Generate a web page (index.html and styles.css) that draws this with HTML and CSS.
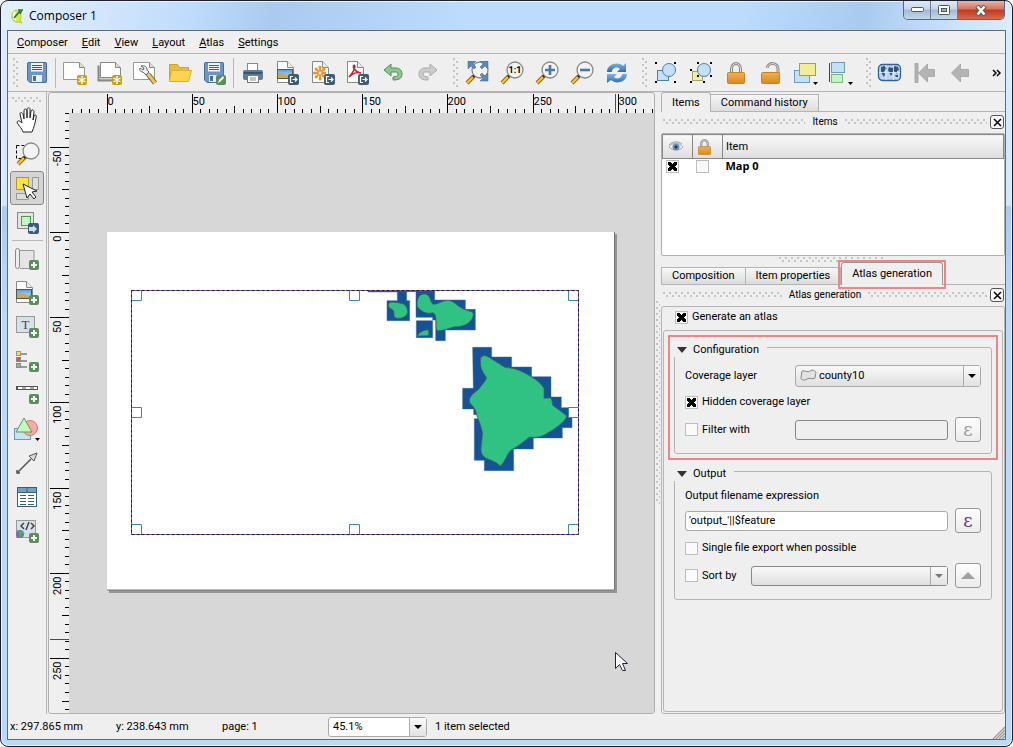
FILE: index.html
```html
<!DOCTYPE html>
<html lang="en">

<head>
    <meta charset="UTF-8">
    <meta name="viewport" content="width=device-width, initial-scale=1.0">
    <title>Composer 1</title>
    <link rel="stylesheet" href="styles.css">
</head>

<body>
<svg class="defs" width="0" height="0" aria-hidden="true">
    <defs>
        <linearGradient id="lockGold" x1="0" x2="0" y1="0" y2="1">
            <stop offset="0" stop-color="#eeb055"/><stop offset="1" stop-color="#d98a1c"/>
        </linearGradient>
        <linearGradient id="refreshBlue" x1="0" x2="0" y1="0" y2="1">
            <stop offset="0" stop-color="#7fb2e6"/><stop offset="1" stop-color="#2f6cb4"/>
        </linearGradient>
        <linearGradient id="sky" x1="0" x2="0" y1="0" y2="1">
            <stop offset="0" stop-color="#4f9fe0"/><stop offset="1" stop-color="#d3ecfb"/>
        </linearGradient>
        <symbol id="plus" viewBox="0 0 10 10">
            <rect width="10" height="10" rx="2" fill="#5a8f5a"/>
            <path d="M5 2v6M2 5h6" stroke="#fff" stroke-width="2"/>
        </symbol>
        <symbol id="star" viewBox="0 0 10 10">
            <rect width="10" height="10" rx="2" fill="#c8a010"/>
            <path d="M5 1v8M1.5 3l7 4M1.5 7l7-4" stroke="#fff" stroke-width="1.4"/>
        </symbol>
        <symbol id="export" viewBox="0 0 11 11">
            <rect width="11" height="11" rx="2" fill="#3f5c76"/>
            <path d="M5 2.5H2.5v6H5M4.5 5.5h4M7 3.5l2 2-2 2" fill="none" stroke="#fff" stroke-width="1.2"/>
        </symbol>
        <symbol id="floppy" viewBox="0 0 20 21">
            <path d="M1 .5h18l.5.5v19l-.5.5H3L.5 18V1z" fill="#6b95c6" stroke="#4a6f9c"/>
            <rect x="4" y="1" width="12" height="8.500" fill="#f4f4f4"/>
            <path d="M5 3.500h10M5 5.500h10M5 7.500h10" stroke="#555"/>
            <rect x="5" y="13" width="10" height="7" fill="#eee"/>
            <rect x="6" y="14" width="3" height="5" fill="#496d99"/>
        </symbol>
        <symbol id="sheet" viewBox="0 0 17 22">
            <path d="M.5.500h10l6 6v15H.5z" fill="#fff" stroke="#888"/>
            <path d="M10.500.500v6h6" fill="#eee" stroke="#888"/>
        </symbol>
        <symbol id="lens" viewBox="0 0 24 24">
            <path d="M2 22l7-7" stroke="#8a5a10" stroke-width="4"/>
            <path d="M2 22l7-7" stroke="#f7c531" stroke-width="2.400"/>
            <path d="M8 16l3-3" stroke="#222" stroke-width="2.500"/>
            <circle cx="15" cy="9" r="8" fill="#f3f3f3" stroke="#888" stroke-width="1.300"/>
        </symbol>
        <symbol id="lock" viewBox="0 0 18 22">
            <path d="M4.500 11V7a4.500 5.500 0 0 1 9 0v4" fill="none" stroke="#888" stroke-width="3"/>
            <path d="M4.500 11V7a4.500 5.500 0 0 1 9 0v4" fill="none" stroke="#ddd"/>
            <rect x=".5" y="10.500" width="17" height="11" rx="1" fill="url(#lockGold)" stroke="#c98220"/>
        </symbol>
    </defs>
</svg>

<div class="window">
    <header class="titlebar">
        <svg class="logo" width="14" height="16" viewBox="0 0 14 16">
            <path d="M6 2C2 3 1 7 2 10s4 5 7 4l3 1-2-3c2-3 1-8-4-10z" fill="#d8e84a" stroke="#b7c93a"/>
            <path d="M5 4c-2 2-2 6 1 8" fill="none" stroke="#fff" stroke-width="2"/>
            <path d="M4 10l6-7M8 2h4l-2 4" fill="none" stroke="#207a2a" stroke-width="1.600"/>
        </svg>
        <h1>Composer 1</h1>
        <div class="win-buttons">
            <button aria-label="Minimize"><svg width="13" height="6"><rect x=".5" y=".5" width="12" height="4" rx="1" fill="#fff" stroke="#555"/></svg></button>
            <button aria-label="Maximize"><svg width="12" height="10"><rect x=".5" y=".5" width="11" height="9" rx="1" fill="#fff" stroke="#555"/><rect x="3.500" y="3.500" width="5" height="3" fill="#9bb5d0" stroke="#555"/></svg></button>
            <button class="close" aria-label="Close"><svg width="12" height="11" viewBox="0 0 12 11"><path d="M2 1l8 9M10 1l-8 9" stroke="#555" stroke-width="4.500"/><path d="M2.500 1.500l7 8M9.500 1.500l-7 8" stroke="#fff" stroke-width="2.600"/></svg></button>
        </div>
    </header>

    <div class="client">
        <nav class="menubar">
            <a href="#"><u>C</u>omposer</a>
            <a href="#"><u>E</u>dit</a>
            <a href="#"><u>V</u>iew</a>
            <a href="#"><u>L</u>ayout</a>
            <a href="#"><u>A</u>tlas</a>
            <a href="#"><u>S</u>ettings</a>
        </nav>

        <div class="toolbar">
            <span class="grip first"></span>
            <button aria-label="Save project"><svg width="24" height="24"><use href="#floppy" x="2" y="1" width="20" height="21"/></svg></button>
            <span class="sep"></span>
            <button aria-label="New composer"><svg width="26" height="24">
                <path d="M1.500 1.500h16l5 5v12h-21z" fill="#fff" stroke="#999"/><path d="M17.500 1.500v5h5" fill="#ddd" stroke="#888"/>
                <use href="#star" x="15" y="14" width="10" height="10"/></svg></button>
            <button aria-label="Duplicate composer"><svg width="26" height="24">
                <path d="M1.500 4.500v15h20" fill="#ccc" stroke="#888" stroke-width="2"/>
                <path d="M3.500 1.500h15l5 5v10h-20z" fill="#fff" stroke="#888"/><path d="M18.500 1.500v5h5" fill="#ddd" stroke="#888"/>
                <use href="#star" x="15" y="14" width="10" height="10"/></svg></button>
            <button aria-label="Composer manager"><svg width="26" height="24">
                <path d="M1.500 1.500h16l5 5v12h-21z" fill="#fff" stroke="#999"/><path d="M17.500 1.500v5h5" fill="#ddd" stroke="#888"/>
                <path d="M9 5c4-1 6 1 6 4l2 2-3 3-3-3c-3 0-4-2-3-4l3 2 1-2z" fill="#eee" stroke="#666"/>
                <path d="M16 13l7 9" stroke="#7d6330" stroke-width="5"/><path d="M16 13l7 9" stroke="#e8c866" stroke-width="3"/></svg></button>
            <button aria-label="Add from template"><svg width="24" height="24">
                <path d="M1.500 19.500v-16h8l2 3h9v3" fill="#e8bc3c" stroke="#d0a22c"/>
                <path d="M1.500 20.500l2-11h20l-3 11z" fill="#fbd54f" stroke="#dcae38"/></svg></button>
            <button aria-label="Save as template"><svg width="24" height="24"><use href="#floppy" x="1" y="1" width="20" height="21"/>
                <rect x="13" y="14" width="10" height="10" rx="2" fill="#5a8f5a"/><path d="M15 22l1-3 4-4 1 2-4 4z" fill="#fff"/></svg></button>
            <span class="sep"></span>
            <button aria-label="Print"><svg width="24" height="24">
                <rect x="6.500" y="2.500" width="10" height="8" fill="#fff" stroke="#888"/>
                <rect x="2" y="9" width="20" height="10" rx="2" fill="#5b7d99"/><path d="M3 12h18" stroke="#38546d" stroke-width="2"/>
                <rect x="6.500" y="14.500" width="11" height="7" fill="#fff" stroke="#777"/><path d="M9 17h6M9 19h6" stroke="#888"/></svg></button>
            <button aria-label="Export as image"><svg width="24" height="24"><use href="#sheet" x="1" y="0" width="17" height="22"/>
                <rect x="1.500" y="8.500" width="15" height="9" fill="url(#sky)" stroke="#555"/><path d="M2 12c4-1 8 2 14 3v2H2z" fill="#c9a85a"/>
                <use href="#export" x="12" y="13" width="11" height="11"/></svg></button>
            <button aria-label="Export as SVG"><svg width="24" height="24"><use href="#sheet" x="1" y="0" width="17" height="22"/>
                <path d="M9 6v12M3 12h12M5 8l8 8M13 8l-8 8" stroke="#f09020" stroke-width="1.800"/>
                <g fill="#f09020"><circle cx="9" cy="6" r="1.500"/><circle cx="9" cy="18" r="1.500"/><circle cx="3.500" cy="12" r="1.500"/><circle cx="5" cy="8" r="1.500"/><circle cx="13" cy="8" r="1.500"/><circle cx="5" cy="16" r="1.500"/></g><circle cx="9" cy="12" r="1.500" fill="#fff"/>
                <use href="#export" x="13" y="13" width="11" height="11"/></svg></button>
            <button aria-label="Export as PDF"><svg width="24" height="24"><use href="#sheet" x="1" y="0" width="17" height="22"/>
                <path d="M8 4c2 1 0 7-5 12M8 4c-2 2 2 8 7 8-3-1-8 0-12 4" fill="none" stroke="#c8242a" stroke-width="1.600"/>
                <use href="#export" x="12" y="13" width="11" height="11"/></svg></button>
            <button aria-label="Undo"><svg width="24" height="24"><path d="M3 9l7-6v4h5c4 0 6 3 6 6 0 5-4 6-9 6v-3c3 0 5-1 5-3s-1-2-3-2h-4v4z" fill="#8fc793" stroke="#4e9157"/></svg></button>
            <button aria-label="Redo"><svg width="24" height="24"><path d="M21 9l-7-6v4H9c-4 0-6 3-6 6 0 5 4 6 9 6v-3c-3 0-5-1-5-3s1-2 3-2h4v4z" fill="#ccc" stroke="#aaa"/></svg></button>
            <span class="grip"></span>
            <button aria-label="Zoom full"><svg width="24" height="24"><use href="#lens" width="24" height="24"/>
                <path d="M3 0h8L8 3l3 3-2 2-3-3-3 3zM23 0v8l-3-3-3 3-2-2 3-3-3-3zM23 20h-8l3-3-3-3 2-2 3 3 3-3z" fill="#5c87ba" stroke="#3f6697" stroke-width=".5"/></svg></button>
            <button aria-label="Zoom to 100%"><svg width="24" height="24"><use href="#lens" width="24" height="24"/><text class="lens-text" x="15" y="12">1:1</text></svg></button>
            <button aria-label="Zoom in"><svg width="24" height="24"><use href="#lens" width="24" height="24"/><path d="M15 4v10M10 9h10" stroke="#4677b0" stroke-width="2.600"/></svg></button>
            <button aria-label="Zoom out"><svg width="24" height="24"><use href="#lens" width="24" height="24"/><path d="M10 9h10" stroke="#4677b0" stroke-width="2.600"/></svg></button>
            <button aria-label="Refresh"><svg width="24" height="24">
                <path d="M2 11c0-8 11-11 16-6l3-3v9h-9l3-3c-3-3-8-1-8 3z" fill="url(#refreshBlue)"/>
                <path d="M22 13c0 8-11 11-16 6l-4 3v-9h10l-3 3c3 3 8 1 8-3z" fill="url(#refreshBlue)"/></svg></button>
            <span class="grip"></span>
            <button aria-label="Group items"><svg width="24" height="24">
                <path d="M1 1h2v2H1zM20 1h2v2h-2zM1 20h2v2H1zM20 20h2v2h-2z"/>
                <rect x="3.500" y="9.500" width="11" height="10" fill="#c3e0f7" stroke="#4f7ea5"/><circle cx="15" cy="9" r="6.500" fill="#c3e0f7" stroke="#4f7ea5"/></svg></button>
            <button aria-label="Ungroup items"><svg width="24" height="24">
                <rect x="3.500" y="10.500" width="10" height="9" fill="#f0eda0" stroke="#a5a26a"/><circle cx="15" cy="9" r="6.500" fill="#c3e0f7" stroke="#4f7ea5"/>
                <path d="M1 8h2v2H1zM8 1h2v2H8zM21 1h2v2h-2zM21 14h2v2h-2zM1 20h2v2H1zM14 20h2v2h-2zM8 14h2v2H8z"/></svg></button>
            <button aria-label="Lock items"><svg width="24" height="24"><use href="#lock" x="3" y="1" width="18" height="22"/></svg></button>
            <button aria-label="Unlock items"><svg width="24" height="24">
                <path d="M8 7c1-6 11-6 11 1v4" fill="none" stroke="#888" stroke-width="3"/><path d="M8 7c1-6 11-6 11 1v4" fill="none" stroke="#ddd"/>
                <rect x="2.500" y="11.500" width="18" height="11" rx="1" fill="url(#lockGold)" stroke="#c98220"/></svg></button>
            <button aria-label="Raise items"><svg width="26" height="24"><rect x="1.500" y="9.500" width="15" height="12" fill="#c3e0f7" stroke="#6d9abf"/>
                <rect x="6.500" y="2.500" width="16" height="12" fill="#f2ee98" stroke="#a09d60"/><path d="M20 21h5l-2.500 3z"/></svg></button>
            <button aria-label="Align items"><svg width="26" height="24"><path d="M1.500 2v19" stroke="#444"/><rect x="3.500" y="1.500" width="13" height="10" fill="#c3e0f7" stroke="#6d9abf"/>
                <rect x="3.500" y="13.500" width="11" height="8" fill="#c5f3c5" stroke="#7fb57f"/><path d="M20 21h5l-2.500 3z"/></svg></button>
            <span class="grip"></span>
            <button aria-label="Preview atlas"><svg width="26" height="24"><rect x="1.500" y="3.500" width="22" height="16" rx="4" fill="#bcd3ee" stroke="#34608f" stroke-width="1.300"/>
                <path d="M4 6l3-1 2 1 1 2-2 1-1 2 1 2-1 3-2-3-1-3zM12 6l3 1 3-2 3 1 1 3-2 1v3l-2-2-2-1-1 3-1 2-2-4-1-2zM18 14h3v2h-2z" fill="#2f5480"/><path d="M2 11.500h21M9 4v15M16.500 4v15" stroke="#e5effa" stroke-width=".8"/></svg></button>
            <button aria-label="First feature"><svg width="24" height="24"><path d="M2 2.500h3v19H2zM5.500 12l9-9v5.500h7v7h-7V21z" fill="#b4b4b4" stroke="#999" stroke-width=".7"/></svg></button>
            <button aria-label="Previous feature"><svg width="24" height="24"><path d="M3.500 12l9-9v5.500h8v7h-8V21z" fill="#b4b4b4" stroke="#999" stroke-width=".7"/></svg></button>
            <button class="more" aria-label="More"><svg width="9" height="8"><path d="M1 1l3 3-3 3M5 1l3 3-3 3" fill="none" stroke="#000" stroke-width="1.500"/></svg></button>
        </div>

        <main class="workspace">
            <aside class="toolbox">
                <span class="grip"></span>
                <button aria-label="Pan"><svg width="24" height="26" viewBox="0 0 24 26"><path d="M8 25c-1-4-6-8-6-10 1-2 3-1 5 1L5 7c0-2 2-2 3 0l1 5V4c0-3 3-2 3 0v7-9c1-2 3-1 3 0v9l1-7c1-2 3-1 3 1l-1 8 1-4c1-2 3-1 2 2-1 6-2 9-4 14z" fill="#fff" stroke="#222"/></svg></button>
                <button aria-label="Zoom"><svg width="26" height="24"><path d="M2.500 3.500h11M2.500 3.500v13h11" fill="none" stroke="#000" stroke-dasharray="3 2"/><use href="#lens" x="2" width="24" height="24"/></svg></button>
                <button class="active" aria-label="Select item"><svg width="26" height="26"><rect x="2.500" y="2.500" width="12" height="12" fill="#fbe346" stroke="#b59a25"/>
                    <path d="M18.500 2.500h6v12h-6zM2.500 18.500h12v6h-12z" fill="#ddd" stroke="#999"/><path d="M9 9l14 7-5 1 4 5-2 2-4-5-3 4z" fill="#fff" stroke="#222"/></svg></button>
                <button aria-label="Move item content"><svg width="26" height="24"><rect x="3.500" y="2.500" width="16" height="16" fill="#e4e4e4" stroke="#888"/><rect x="7.500" y="6.500" width="9" height="9" fill="#c5f7c5" stroke="#4d9a55"/>
                    <rect x="14" y="13" width="11" height="11" rx="2" fill="#3f5c76"/><path d="M15 17h4v-2l4 4-4 4v-2h-4z" fill="#cfe0ee"/></svg></button>
                <span class="sep"></span>
                <button aria-label="Add map"><svg width="26" height="26"><path d="M6 4.500h14v18H6" fill="#e4e4e4" stroke="#999"/><rect x="1.500" y="2.500" width="4" height="20" rx="2" fill="#eee" stroke="#888"/><use href="#plus" x="15" y="14" width="10" height="10"/></svg></button>
                <button aria-label="Add image"><svg width="26" height="26"><use href="#sheet" x="2" y="1" width="17" height="22"/>
                    <rect x="2.500" y="9.500" width="15" height="9" fill="url(#sky)" stroke="#555"/><path d="M3 13c4-1 8 2 14 3v2H3z" fill="#c9a85a"/><use href="#plus" x="15" y="15" width="10" height="10"/></svg></button>
                <button aria-label="Add label"><svg width="26" height="24"><rect x="2.500" y="1.500" width="18" height="16" fill="#d6e2ea" stroke="#999"/><text class="tool-t" x="11.500" y="14">T</text><use href="#plus" x="15" y="13" width="10" height="10"/></svg></button>
                <button aria-label="Add legend"><svg width="26" height="22"><path d="M7 4h6M7 11h6M7 17h6" stroke="#999" stroke-width="2"/><rect x="2.500" y="1.500" width="4" height="4" fill="#f3e33a" stroke="#998"/><rect x="2.500" y="7.500" width="4" height="4" fill="#dc5555" stroke="#888"/><rect x="2.500" y="13.500" width="4" height="4" fill="#81bd7c" stroke="#888"/><use href="#plus" x="15" y="12" width="10" height="10"/></svg></button>
                <button aria-label="Add scalebar"><svg width="26" height="18"><rect x="2" y="0" width="22" height="4" fill="#555"/><path d="M4 2h4M12 2h4M20 2h3" stroke="#fff" stroke-width="2"/><path d="M8 2h4M16 2h4" stroke="#aaa" stroke-width="2"/><use href="#plus" x="15" y="8" width="10" height="10"/></svg></button>
                <button aria-label="Add shape"><svg width="28" height="26"><rect x="1.500" y="12.500" width="16" height="11" fill="#c8e2f5" stroke="#6d9abf"/><circle cx="17" cy="12" r="7.500" fill="#f8aaaa" stroke="#d87575"/><path d="M3 16L11 2l8 14z" fill="#c5f7c0" stroke="#5a9a55"/><path d="M22 22h5l-2.500 3z"/></svg></button>
                <button aria-label="Add arrow"><svg width="24" height="24"><path d="M2 22L16 8M2 19v3h3" fill="none" stroke="#555" stroke-width="1.500"/><path d="M22 2l-3 8-5-5z" fill="#ddd" stroke="#555"/></svg></button>
                <button aria-label="Add table"><svg width="22" height="22"><rect x="1.500" y="1.500" width="19" height="19" fill="#fff" stroke="#3b5f76"/><rect x="2" y="2" width="18" height="4" fill="#6fa0bd"/><path d="M2 6.500h18M4 9.500h6M12 9.500h6M4 12.500h6M12 12.500h6M4 15.500h6M12 15.500h6M4 18.500h6M12 18.500h6M11 2v4" stroke="#3b5f76"/></svg></button>
                <button aria-label="Add HTML"><svg width="26" height="26"><rect x="2.500" y="2.500" width="19" height="17" fill="#d6e2ea" stroke="#999"/><path d="M10 5L7 8l3 3M17 5l3 3-3 3M15 4l-3 8" fill="none" stroke="#444" stroke-width="1.500"/><circle cx="6" cy="16" r="4" fill="#7569c0"/><path d="M3 13c3 0 5 2 3 6M7 13l3 3" fill="none" stroke="#4cb54c" stroke-width="2"/><use href="#plus" x="15" y="15" width="10" height="10"/></svg></button>
            </aside>

            <section class="view">
                <svg class="ruler-top" id="rulerTop"></svg>
                <svg class="ruler-left" id="rulerLeft"></svg>
                <svg class="scene">
                    <g transform="translate(38 119)">
                        <rect x="2" y="2" width="508" height="359" fill="#969696"/>
                        <rect width="508" height="358" fill="#fff"/>
                        <path d="M507.500 0v358H0" fill="none" stroke="#777"/>
                        <g transform="translate(243 48) scale(.3333)" stroke="#3a7099" stroke-width="1.500">
                            <path d="M54 33h200v27h92v28h30v62h-90v32h-29v-62h-9v-8h-50V35h-28v27h9v60h-68V62h31V36H54zM199 122h49v51h-49zM368 202h57v29h60v30h60v29h58v61h31v32h32v60h-29v31h-87v33h-59v65h-88v-31h-30V416h12v-12h-14v-17h-33v-62h32z" fill="#165296"/>
                            <path d="M116 70c8-7 34-1 44 2 10 5 15 20 12 28-5 15-30 18-38 12-4-7 0-14-4-21-6-5-17-8-14-21zM205 53c10-16 28-13 34 0 3 10 7 21 14 20 15-2 23-10 35-11 18-2 25 7 37 16 13 10 24 13 42 18 8 8-2 26-12 33-12 9-28 12-43 11-15 5-32 12-48 12-8-2-5-20-6-37-2-7-1-14-10-17-17 5-32-3-42-13-8-9-4-22-1-32zM203 169c2-10 17-20 32-19l2 14c-10 7-23 0-34 5zM392 234c8-13 22-5 34 4 13 7 26 17 40 25 20-2 59 13 80 29 12 7 25 16 36 33v30l19-1c5 3 5 11 7 22 14 11 31 22 42 32-3 14-22 28-42 42-21 12-36 26-69 21-21 16-35 28-56 39-12 12-16 32-31 48-15-14-30-17-46-25-10-6-15-18-12-35l4-38c-4-20-9-35-17-50-2-20-7-26-18-37-14-18 6-31 24-46 9-15 18-18 23-34-12-19-20-24-18-59z" fill="#30c282" stroke="#47664e" stroke-width="2"/>
                        </g>
                        <g fill="none" stroke="#3a86b8">
                            <rect x="24.500" y="58.500" width="447" height="244"/>
                            <path d="M24.500 58.500h10v10h-10zM242.500 58.500h10v10h-10zM461.500 58.500h10v10h-10zM24.500 175.500h10v10h-10zM461.500 175.500h10v10h-10zM24.500 292.500h10v10h-10zM242.500 292.500h10v10h-10zM461.500 292.500h10v10h-10z" fill="#fff"/>
                            <rect x="24.500" y="58.500" width="447" height="244" stroke="#5c0030" stroke-dasharray="3 2"/>
                        </g>
                        <path d="M508.500 420.500v16l4-4 3 6h3l-3-7h5z" fill="#fff" stroke="#223"/>
                    </g>
                </svg>
            </section>

            <div class="splitter"><span class="grip"></span></div>

            <aside class="docks">
                <section class="dock items">
                    <div class="tabs">
                        <button class="tab active">Items</button>
                        <button class="tab">Command history</button>
                    </div>
                    <div class="dock-title">
                        <span class="grip"></span><h2>Items</h2><span class="grip"></span>
                        <button aria-label="Close panel"><svg width="9" height="9"><path d="M1 1l7 7M8 1L1 8" stroke="#000" stroke-width="1.500"/></svg></button>
                    </div>
                    <div class="tree">
                        <table>
                            <thead>
                            <tr>
                                <th class="narrow"><svg width="16" height="14" viewBox="0 0 16 14"><path d="M1 7c3-5 10-5 14 0-4 4-10 4-14 0z" fill="#eee" stroke="#aaa"/><circle cx="8" cy="7" r="3.500" fill="#6292c0"/><circle cx="8" cy="7" r="1.500" fill="#234"/><path d="M1 5c4-4 9-4 13-1" fill="none" stroke="#999"/></svg></th>
                                <th class="narrow"><svg width="13" height="16"><use href="#lock" width="13" height="16"/></svg></th>
                                <th>Item</th>
                            </tr>
                            </thead>
                            <tbody>
                            <tr>
                                <td><input type="checkbox" checked aria-label="Visible"></td>
                                <td><input type="checkbox" aria-label="Locked"></td>
                                <td>Map 0</td>
                            </tr>
                            </tbody>
                        </table>
                    </div>
                </section>

                <span class="grip dock-split"></span>

                <section class="dock atlas">
                    <div class="tabs">
                        <button class="tab">Composition</button>
                        <button class="tab">Item properties</button>
                        <button class="tab active callout">Atlas generation</button>
                    </div>
                    <div class="dock-title">
                        <span class="grip"></span><h2>Atlas generation</h2><span class="grip"></span>
                        <button aria-label="Close panel"><svg width="9" height="9"><path d="M1 1l7 7M8 1L1 8" stroke="#000" stroke-width="1.500"/></svg></button>
                    </div>
                    <form class="panel">
                        <label class="check main-check"><input type="checkbox" checked>Generate an atlas</label>
                        <div class="panel-body">
                            <div class="callout">
                                <fieldset>
                                    <legend><span class="arrow"></span>Configuration</legend>
                                    <div class="row">
                                        <label class="name" for="layer">Coverage layer</label>
                                        <div class="combo with-icon">
                                            <svg width="17" height="13"><path d="M2 2c3-1 5 2 8 0s5 0 6 1l-1 6c-3 2-5-1-8 1s-6 1-6-1z" fill="#e2e2e2" stroke="#888"/></svg>
                                            <select id="layer"><option>county10</option></select>
                                        </div>
                                    </div>
                                    <label class="check"><input type="checkbox" checked>Hidden coverage layer</label>
                                    <div class="row">
                                        <label class="check name"><input type="checkbox">Filter with</label>
                                        <input class="text" type="text" aria-label="Filter expression" disabled>
                                        <button type="button" class="square" aria-label="Filter expression builder" disabled>ε</button>
                                    </div>
                                </fieldset>
                            </div>
                            <fieldset>
                                <legend><span class="arrow"></span>Output</legend>
                                <div class="field">
                                    <label for="filename">Output filename expression</label>
                                    <div class="row">
                                        <input class="text" id="filename" type="text" value="'output_'||$feature">
                                        <button type="button" class="square" aria-label="Expression builder">ε</button>
                                    </div>
                                </div>
                                <label class="check"><input type="checkbox">Single file export when possible</label>
                                <div class="row">
                                    <label class="check sort"><input type="checkbox">Sort by</label>
                                    <div class="combo off"><select aria-label="Sort by" disabled><option></option></select></div>
                                    <button type="button" class="square" aria-label="Sort direction" disabled><svg width="14" height="7"><path d="M0 7l7-7 7 7z" fill="#a0a0a0"/></svg></button>
                                </div>
                            </fieldset>
                        </div>
                    </form>
                </section>
            </aside>
        </main>

        <footer class="statusbar">
            <span class="coord">x: 297.865 mm</span>
            <span class="coord">y: 238.643 mm</span>
            <span class="coord">page: 1</span>
            <div class="combo zoom"><select aria-label="Zoom level"><option>45.1%</option></select></div>
            <span class="message">1 item selected</span>
            <svg class="size-grip" width="13" height="13"><path d="M1 13L13 1M4 13l9-9M7 13l6-6M10 13l3-3" stroke="#999" stroke-width="1.300"/></svg>
        </footer>
    </div>
</div>

<script src="script.js"></script>
</body>

</html>
```

FILE: styles.css
```css
* {
    box-sizing: border-box;
}

html,
body {
    height: 100%;
    margin: 0;
    overflow: hidden;
    background: #fff;
    font-family: Roboto, sans-serif;
    font-size: 11px;
    line-height: 14px;
    color: #000;
}

button,
input,
select {
    margin: 0;
    font: inherit;
    color: inherit;
}

.defs {
    position: absolute;
}

.window {
    height: 100%;
    display: flex;
    flex-direction: column;
    padding: 0 6px 6px;
    border: 1px solid #1c1f2b;
    border-radius: 8px;
    background: linear-gradient(#dcecfb 0, #d3e7fb 204px, #a9cdf0 206px, #b9dafb 320px, #b9dafb);
    box-shadow: inset 0 0 0 1px #e9f4fe;
}

/* title bar */
.titlebar {
    height: 28px;
    flex: none;
    display: flex;
    align-items: center;
    margin: 1px -5px 0;
    padding-left: 8px;
    border-radius: 6px 6px 0 0;
    background: linear-gradient(100deg, #e4f0fc 0, #d0e5fb 110px, #bddcfb 190px, #aacbef 270px, #bbdcfc 460px, #bbdcfd 730px, #a9cbef 850px, #d0e6fc 960px, #dcecfb);
}

.titlebar h1 {
    margin: 0;
    padding-left: 5px;
    font-family: "Open Sans", sans-serif;
    font-size: 12px;
    font-weight: normal;
}

.win-buttons {
    display: flex;
    align-self: flex-start;
    margin: -1px 6px 0 auto;
    border: 1px solid #59687c;
    border-top: 0;
    border-radius: 0 0 5px 5px;
    overflow: hidden;
}

.win-buttons button {
    width: 27px;
    height: 18px;
    display: flex;
    align-items: center;
    justify-content: center;
    padding: 0;
    border: 0;
    border-right: 1px solid #6c7c92;
    background: linear-gradient(#dfeaf6, #c5d5e7 45%, #a3b9d1 50%, #c3d8ee);
}

.win-buttons .close {
    width: 46px;
    border-right: 0;
    background: linear-gradient(#e9b3a6, #d3735f 45%, #bd3a22 50%, #d9694b);
}

.client {
    flex: 1;
    min-height: 0;
    display: flex;
    flex-direction: column;
    border: 1px solid #5b6c7d;
    background: #efefef;
}

.menubar {
    display: flex;
    gap: 14px;
    padding: 5px 9px 3px;
    border-bottom: 1px solid #b4b4b4;
}

.menubar a {
    color: #000;
    text-decoration: none;
}

/* toolbars */
.toolbar {
    display: flex;
    align-items: center;
    height: 38px;
    flex: none;
    border-bottom: 1px solid #b4b4b4;
}

.toolbar button,
.toolbox button {
    display: flex;
    align-items: center;
    justify-content: center;
    padding: 0;
    border: 0;
    background: none;
}

.toolbar button {
    width: 35px;
    height: 34px;
    flex: none;
}

.toolbar .more {
    width: 18px;
    margin-left: auto;
}

.grip {
    display: block;
    background-image: radial-gradient(circle at 1px 1px, #c4c4c4 1px, transparent 1px), radial-gradient(circle at 4px 4px, #c4c4c4 1px, transparent 1px);
    background-size: 6px 6px;
}

.toolbar .grip {
    width: 6px;
    height: 30px;
    margin-left: 8px;
    flex: none;
}

.toolbar .first {
    margin-left: 5px;
}

.toolbar .sep {
    width: 1px;
    height: 30px;
    margin: 0 1px;
    background: #b8b8b8;
}

.lens-text {
    font-size: 9px;
    font-weight: bold;
    text-anchor: middle;
}

.tool-t {
    font-family: "Liberation Serif", serif;
    font-size: 13px;
    text-anchor: middle;
    fill: #444;
}

.workspace {
    flex: 1;
    min-height: 0;
    display: flex;
}

.toolbox {
    width: 39px;
    flex: none;
    display: flex;
    flex-direction: column;
    align-items: center;
    padding-top: 5px;
    border-right: 1px solid #b4b4b4;
}

.toolbox .grip {
    width: 30px;
    height: 6px;
}

.toolbox button {
    width: 34px;
    height: 34px;
    flex: none;
    border-radius: 3px;
}

.toolbox .active {
    border: 1px solid #888;
    background: #d4d4d4;
}

.toolbox .sep {
    width: 31px;
    height: 1px;
    margin: 1px 0;
    background: #b8b8b8;
}

/* composition view */
.view {
    flex: 1;
    min-width: 0;
    display: grid;
    grid-template: 20px minmax(0, 1fr) / 20px minmax(0, 1fr);
    margin-left: 1px;
    border: 1px solid #b0b0b0;
    border-radius: 3px;
    overflow: hidden;
}

.view svg {
    display: block;
    width: 100%;
    height: 100%;
}

.ruler-top {
    grid-column: 1 / 3;
}

.ruler-top text,
.ruler-left text {
    font-size: 11px;
}

.scene {
    background: #d7d7d7;
}

.splitter {
    width: 6px;
    flex: none;
    display: flex;
    align-items: center;
}

.splitter .grip {
    width: 4px;
    height: 204px;
    margin-left: 1px;
    background-size: 4px 6px;
}

/* docks */
.docks {
    width: 344px;
    flex: none;
    display: flex;
    flex-direction: column;
}

.dock {
    display: flex;
    flex-direction: column;
}

.atlas {
    flex: 1;
    min-height: 0;
}

.tabs {
    display: flex;
    align-items: flex-end;
    padding-right: 1px;
    box-shadow: inset 0 -1px #b4b4b4;
}

.tab {
    height: 18px;
    padding: 0 10px;
    border: 1px solid #b4b4b4;
    border-left-width: 0;
    background: linear-gradient(#f7f7f7, #dcdcdc);
}

.tab:first-child {
    border-left-width: 1px;
}

.tab.active {
    height: 20px;
    border-bottom: 0;
    border-radius: 3px 3px 0 0;
    background: #efefef;
}

.atlas .tab.active {
    height: 23px;
    border-left-width: 1px;
    border-color: #999;
}

.callout {
    position: relative;
}

.callout::after {
    content: "";
    position: absolute;
    inset: -2px -6px -6px;
    border: 2px solid #f08585;
    pointer-events: none;
}

.tab.callout::after {
    inset: -3px -4px -4px;
}

.dock-title {
    display: flex;
    align-items: center;
    gap: 7px;
    padding: 3px 1px 4px 2px;
}

.dock-title .grip {
    flex: 1;
    height: 6px;
}

.dock-title h2 {
    margin: 0;
    font-size: 10px;
    font-weight: normal;
}

.dock-title button {
    width: 14px;
    height: 14px;
    display: flex;
    align-items: center;
    justify-content: center;
    margin-left: -4px;
    padding: 0;
    border: 1px solid #555;
    border-radius: 3px;
    background: #f8f8f8;
}

.tree {
    height: 123px;
    border: 1px solid #b0b0b0;
    border-radius: 2px;
    background: #fff;
}

.tree table {
    width: 100%;
    border-collapse: collapse;
    table-layout: fixed;
}

.tree th {
    height: 24px;
    padding: 0 3px;
    border: 1px solid #888;
    background: linear-gradient(#f8f8f8, #dedede);
    font-weight: normal;
    text-align: left;
}

.tree th.narrow {
    width: 30px;
    padding: 0 5px;
}

.tree th svg {
    display: block;
}

.tree td {
    padding: 0 3px;
    font-family: "Open Sans", sans-serif;
    font-weight: bold;
}

.tree td input {
    display: block;
}

.dock-split {
    width: 108px;
    height: 5px;
    flex: none;
    margin: 1px auto 0;
}

input[type="checkbox"] {
    appearance: none;
    width: 13px;
    height: 13px;
    flex: none;
    border: 1px solid #bdbdbd;
    background: #fafafa;
}

input[type="checkbox"]:checked {
    background:
        linear-gradient(45deg, transparent 36%, #000 36%, #000 64%, transparent 64%) 1px 1px / 9px 9px no-repeat,
        linear-gradient(-45deg, transparent 36%, #000 36%, #000 64%, transparent 64%) 1px 1px / 9px 9px no-repeat,
        #fafafa;
}

.check {
    display: flex;
    align-items: center;
    gap: 4px;
}

.panel {
    flex: 1;
    min-height: 0;
    display: flex;
    flex-direction: column;
    padding: 3px 1px 1px;
    border: 1px solid #b4b4b4;
    border-radius: 3px;
}

.main-check {
    padding: 0 0 6px 12px;
}

.panel-body {
    flex: 1;
    display: flex;
    flex-direction: column;
    gap: 7px;
    padding: 6px 10px 0;
    border: 1px solid #b4b4b4;
    border-radius: 3px;
}

fieldset {
    min-width: 0;
    margin: 0;
    padding: 8px 10px 11px;
    border: 1px solid #b4b4b4;
    border-radius: 3px;
    display: flex;
    flex-direction: column;
    gap: 8px;
}

legend {
    display: flex;
    align-items: center;
    gap: 6px;
    margin-left: -11px;
    padding: 6px 8px 0 3px;
    background: #efefef;
}

.arrow {
    border: 5px solid transparent;
    border-top: 6px solid #333;
    border-bottom: 0;
}

.row {
    display: flex;
    align-items: center;
    gap: 7px;
}

.field {
    display: flex;
    flex-direction: column;
    gap: 5px;
}

.name {
    width: 103px;
    flex: none;
}

.sort {
    width: 59px;
    flex: none;
}

.text {
    flex: 1;
    min-width: 0;
    height: 20px;
    padding: 0 3px;
    border: 1px solid #aaa;
    border-radius: 3px;
    background: #fff;
}

.text:disabled {
    border: 1px solid #888;
    background: #efefef;
}

.square {
    width: 26px;
    height: 25px;
    flex: none;
    display: flex;
    align-items: center;
    justify-content: center;
    padding: 0;
    border: 1px solid #999;
    border-radius: 3px;
    background: linear-gradient(#fdfdfd, #ececec);
    font-family: "DejaVu Serif", serif;
    font-size: 18px;
    color: #5e3a70;
}

.square:disabled {
    color: #999;
}

.combo {
    position: relative;
    flex: 1;
    min-width: 0;
    display: flex;
}

.combo select {
    appearance: none;
    width: 100%;
    height: 20px;
    padding: 0 20px 0 4px;
    border: 1px solid #aaa;
    border-radius: 3px;
    background: linear-gradient(#f8f8f8, #dfdfdf);
    opacity: 1;
}

.with-icon select {
    height: 22px;
    padding-left: 23px;
}

.with-icon svg {
    position: absolute;
    left: 5px;
    top: 4px;
}

/* drop-down arrow: a divider strip with a triangle in it */
.combo::before,
.combo::after {
    content: "";
    position: absolute;
    pointer-events: none;
}

.combo::before {
    top: 1px;
    right: 1px;
    bottom: 1px;
    width: 16px;
    border-left: 1px solid #aaa;
    background: linear-gradient(#fafafa, #e2e2e2);
}

.combo::after {
    right: 5px;
    top: calc(50% - 2px);
    border: 4px solid transparent;
    border-top-color: #000;
    border-bottom: 0;
}

.off::after {
    border-top-color: #777;
}

.off select {
    border-color: #888;
}

/* status bar */
.statusbar {
    display: flex;
    align-items: center;
    height: 25px;
    flex: none;
    padding-left: 2px;
}

.coord {
    width: 106px;
}

.zoom {
    flex: 0 0 99px;
}

.zoom select {
    background: #fff;
}

.message {
    padding-left: 8px;
}

.size-grip {
    margin-left: auto;
    align-self: flex-end;
}
```

FILE: script.js
```js
var STEP = 8.52; // pixels for 5 mm at the current zoom

function add(parent, name, attrs, text) {
    var el = document.createElementNS('http://www.w3.org/2000/svg', name);
    for (var key in attrs) {
        el.setAttribute(key, attrs[key]);
    }
    if (text !== undefined) {
        el.textContent = text;
    }
    parent.appendChild(el);
}

function drawRuler(id, zero, from, mark, vertical) {
    var svg = document.getElementById(id);
    var size = vertical ? svg.clientHeight : svg.clientWidth;
    for (var i = Math.ceil((from - zero) / STEP); zero + i * STEP < size; i++) {
        var pos = Math.floor(zero + i * STEP) + 0.5;
        var len = i % 10 === 0 ? 19 : (i % 5 === 0 ? 7 : 4);
        var d = vertical ? 'M' + (20 - len) + ' ' + pos + 'H20' : 'M' + pos + ' ' + (20 - len) + 'V20';
        add(svg, 'path', {d: d, stroke: '#000'});
        if (i % 10 === 0) {
            if (vertical) {
                add(svg, 'text', {transform: 'translate(12 ' + (pos + 3) + ') rotate(-90)', 'text-anchor': 'end'}, i * 5);
            } else {
                add(svg, 'text', {x: pos, y: 12}, i * 5);
            }
        }
    }
    add(svg, 'path', {d: vertical ? 'M1 ' + mark + 'H20' : 'M' + mark + ' 1V20', stroke: '#f00'});
}

drawRuler('rulerTop', 58, 20, 566.5, false);
drawRuler('rulerLeft', 119.4, 0, 526.5, true);
```
